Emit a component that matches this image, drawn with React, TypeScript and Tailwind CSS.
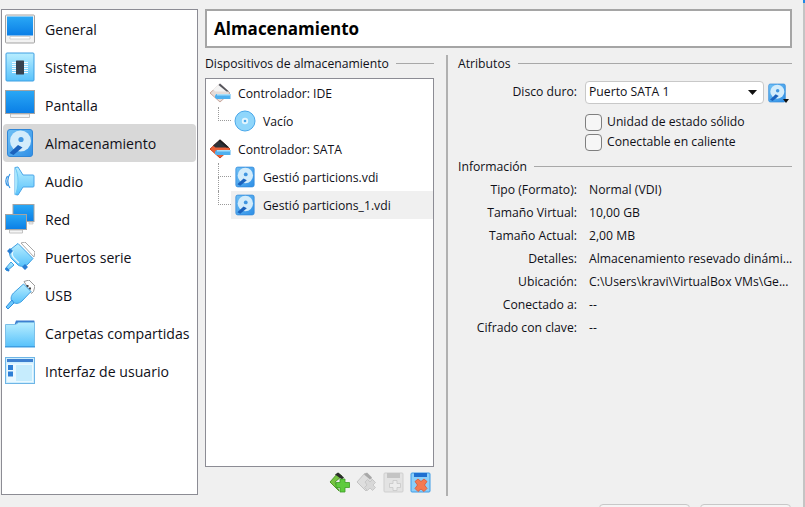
// App.tsx - VirtualBox storage settings page
import type { ReactNode } from "react"

function Ico({ size = 30, children }: { size?: number; children: ReactNode }) {
  return (
    <svg width={size} height={size} viewBox="0 0 30 30" className="shrink-0">
      <defs>
        <linearGradient id="scr" x1="0" y1="0" x2="0" y2="1">
          <stop offset="0" stopColor="#2aa8f5" />
          <stop offset="1" stopColor="#0a7ee6" />
        </linearGradient>
        <linearGradient id="lb" x1="0" y1="0" x2="0" y2="1">
          <stop offset="0" stopColor="#b9eeff" />
          <stop offset="1" stopColor="#58c2fb" />
        </linearGradient>
        <linearGradient id="disk" x1="0" y1="0" x2="1" y2="1">
          <stop offset="0" stopColor="#6fc0f5" />
          <stop offset="1" stopColor="#2f8fe6" />
        </linearGradient>
      </defs>
      {children}
    </svg>
  )
}

function General() {
  return (
    <Ico>
      <rect x="0.5" y="1" width="29" height="28" rx="1" fill="#f2f2f2" stroke="#a3a3a3" />
      <rect x="2" y="2.5" width="26" height="19" fill="url(#scr)" />
      <path d="M5 22.5h20v2.5H5z" fill="#fff" stroke="#c4c4c4" strokeWidth="0.7" />
    </Ico>
  )
}

function Sistema() {
  return (
    <Ico>
      <rect x="1" y="1" width="28" height="28" rx="1" fill="url(#lb)" stroke="#3f9fe2" />
      <g stroke="#f4fbff" strokeWidth="1">
        <path d="M7 10.5h16M7 12.5h16M7 14.5h16M7 16.5h16M7 18.5h16M7 20.5h16" />
      </g>
      <rect x="11" y="8.5" width="8" height="14" rx="0.5" fill="#36424f" />
    </Ico>
  )
}

function Pantalla() {
  return (
    <Ico>
      <rect x="0.5" y="0.5" width="29" height="23" fill="url(#scr)" stroke="#a3a3a3" />
      <path d="M5.5 24h19v3.5h-19z" fill="#f5f5f5" stroke="#b5b5b5" strokeWidth="0.8" />
    </Ico>
  )
}

function Disk({ size = 30 }: { size?: number }) {
  return (
    <Ico size={size}>
      <rect x="2.5" y="1.5" width="25" height="27" rx="2.5" fill="url(#disk)" stroke="#2f86d8" />
      <circle cx="15.5" cy="13" r="10.5" fill="#d3ecfb" />
      <circle cx="16" cy="11.5" r="2.6" fill="#3f95e0" />
      <path d="M4.5 25 13 17l4.500 2.500-9 7.500z" fill="#1b62bd" />
    </Ico>
  )
}

function Audio() {
  return (
    <Ico>
      <path d="M10 1.5 L13 1 L18 9 h10 a1 1 0 0 1 1 1 v10 a1 1 0 0 1-1 1 h-10 l-5 8 -3-.5z" fill="url(#lb)" stroke="#4aa5e8" />
      <path d="M10 1.5c4 6 4 21 0 27.500" fill="#a9e6fd" stroke="#6cc8f5" strokeWidth="1" />
      <path d="M5 8c-3 4-3 10 0 14M2.500 10c-2 3-2 7 0 10" fill="none" stroke="#2f8fe0" strokeWidth="1.2" />
    </Ico>
  )
}

function Red() {
  return (
    <Ico>
      <rect x="8" y="0.5" width="21" height="17" fill="url(#scr)" stroke="#a3a3a3" />
      <path d="M24 18h4v2h-4z" fill="#eee" stroke="#bbb" strokeWidth="0.6" />
      <rect x="0.5" y="10.5" width="21" height="15" fill="url(#scr)" stroke="#a3a3a3" />
      <path d="M4.5 26h13v3h-13z" fill="#f5f5f5" stroke="#b5b5b5" strokeWidth="0.8" />
    </Ico>
  )
}

function Puertos() {
  return (
    <Ico>
      <path d="M16 1 20 0 30 10l-1 5z" fill="#fff" stroke="#a8a8a8" />
      <path d="M13 1.5 28 16.5 23 22c-3 3-7 3-10 1L7 17c-3-3-3-7-1-10z" fill="url(#lb)" stroke="#3f9fe2" />
      <path d="M8 9c-1 2-1 5 1 7l5 5" fill="none" stroke="#e4f7ff" strokeWidth="1.4" />
      <path d="M2 9l3-3 3 3-3 3zM17 25l3-3 3 3-3 3z" fill="#2a7ed4" />
      <path d="M6 20 0 27l2 2 7-6z" fill="url(#lb)" stroke="#3f9fe2" />
      <path d="M1 26l3 3" stroke="#2a7ed4" strokeWidth="2" />
    </Ico>
  )
}

function Usb() {
  return (
    <Ico>
      <path d="M19 1.5 24 0l6 6-1.5 5.5-2 2z" fill="#fff" stroke="#9a9a9a" />
      <rect x="21.5" y="5" width="2" height="2" fill="#444" />
      <rect x="24" y="7.5" width="2" height="2" fill="#444" />
      <path d="M18.5 4 26 11.5 17 21c-3 3-7 3-9.500 1-2-2-2-6 1-9z" fill="url(#lb)" stroke="#3f9fe2" />
      <path d="M7 20 1 27l2 2 6-6z" fill="#6cc8fb" stroke="#2f8fe0" />
    </Ico>
  )
}

function Carpeta() {
  return (
    <Ico>
      <path d="M11 2.5h18a.5.5 0 0 1 .5.5v5H9z" fill="#3d7fd0" />
      <path d="M.5 6.5h10l3-2h16v24H.5z" fill="url(#lb)" stroke="#7bbfe8" />
      <path d="M0 28h30v1.5H0z" fill="#3f9fe2" />
    </Ico>
  )
}

function Interfaz() {
  return (
    <Ico>
      <rect x="0.5" y="1.5" width="29" height="26" fill="#cdeefe" stroke="#6eb5e6" />
      <rect x="2" y="3" width="26" height="3" fill="#3d7fd0" />
      <rect x="2" y="7.5" width="26" height="18.5" fill="#eaf8ff" />
      <rect x="3" y="9" width="5" height="5" fill="#2e7fd6" />
      <rect x="3" y="15.5" width="5" height="5" fill="#2e7fd6" />
      <rect x="11" y="9" width="16" height="16" fill="#c6ecfd" />
    </Ico>
  )
}

function Controller({ sata }: { sata?: boolean }) {
  return (
    <svg width="22" height="20" viewBox="0 0 22 20" className="shrink-0">
      <path d="M11 1 21 10 11 19 1 10z" fill={sata ? "#e8603a" : "#e6dcd8"} stroke={sata ? "#c9451f" : "#c9a79d"} />
      <path d="M11 .5 20 8.500H6.500L4 6.500z" fill={sata ? "#2e3238" : "#f4f4f4"} />
      <path d="M11 .5 20 8.500h-2.500L9.500 2z" fill={sata ? "#1f2226" : "#55555c"} />
      <path d="M7.500 11h14v5H7.500L6 14.500V12.500z" fill="#4fb0ef" />
      <path d="M8 11h13.500v1.500H8z" fill="#a9dffa" />
    </svg>
  )
}

function Cd() {
  return (
    <svg width="22" height="22" viewBox="0 0 22 22" className="shrink-0">
      <circle cx="11" cy="11" r="10" fill="#8fd6fb" stroke="#4aa8ea" />
      <circle cx="11" cy="11" r="3.2" fill="#e2f5fe" />
      <circle cx="11" cy="11" r="1.3" fill="#4aa8ea" />
    </svg>
  )
}

function AddCtrl() {
  return (
    <svg width="21" height="21" viewBox="0 0 21 21">
      <path d="M1 10 9 1l4 3-7 6 4 9z" fill="#76c442" stroke="#4d9a28" />
      <path d="M6 2.5 9 .5l6 5-2 2z" fill="#2c2c2c" />
      <path d="M11 7h5v3.500h4.500v5H16V20h-5v-4.500H7v-5h4z" fill="#5ecb3e" stroke="#3d9c26" strokeWidth="0.8" />
    </svg>
  )
}

function RemoveCtrl() {
  return (
    <svg width="21" height="21" viewBox="0 0 21 21">
      <path d="M1 10 9 1l9 8-8 10z" fill="#dedede" stroke="#c4c4c4" />
      <path d="M8 2.5 11 .5l5 5-2 2z" fill="#a8a8a8" />
      <path d="M9 10l2.500-2.500L14 10l2.500-2.500 3 3L17 13l2.500 2.500-3 3L14 16l-2.500 2.500-3-3L11 13z" fill="#d8d8d8" stroke="#c2c2c2" strokeWidth="0.8" />
    </svg>
  )
}

function AddDisk() {
  return (
    <svg width="21" height="21" viewBox="0 0 21 21">
      <rect x="1" y="1" width="19" height="19" rx="1" fill="#e3e3e3" stroke="#cfcfcf" />
      <rect x="4" y="1" width="13" height="5" fill="#c4c4c4" />
      <path d="M10 8.500h4v3h3.500v4H14v3h-4v-3H6.500v-4H10z" fill="#ececec" stroke="#c8c8c8" strokeWidth="0.8" />
    </svg>
  )
}

function RemoveDisk() {
  return (
    <svg width="21" height="21" viewBox="0 0 21 21">
      <rect x="1" y="1" width="19" height="19" rx="1" fill="#8ccff9" stroke="#3f9be6" />
      <rect x="4" y="1" width="13" height="4" fill="#1f6fd0" />
      <path d="M8 7l3 2.500L14 7l3 2.500-2.500 3.500L17 16.500 14 19.500l-3-2.500-3 2.500-3-3 2.500-3.500L5 9.500z" fill="#f47a52" stroke="#e0552f" strokeWidth="0.8" />
    </svg>
  )
}

const categories: { label: string; icon: ReactNode }[] = [
  { label: "General", icon: <General /> },
  { label: "Sistema", icon: <Sistema /> },
  { label: "Pantalla", icon: <Pantalla /> },
  { label: "Almacenamiento", icon: <Disk /> },
  { label: "Audio", icon: <Audio /> },
  { label: "Red", icon: <Red /> },
  { label: "Puertos serie", icon: <Puertos /> },
  { label: "USB", icon: <Usb /> },
  { label: "Carpetas compartidas", icon: <Carpeta /> },
  { label: "Interfaz de usuario", icon: <Interfaz /> },
]

const info = [
  ["Tipo (Formato):", "Normal (VDI)"],
  ["Tamaño Virtual:", "10,00 GB"],
  ["Tamaño Actual:", "2,00 MB"],
  ["Detalles:", "Almacenamiento resevado dinámi..."],
  ["Ubicación:", "C:\\Users\\kravi\\VirtualBox VMs\\Ge..."],
  ["Conectado a:", "--"],
  ["Cifrado con clave:", "--"],
]

function Heading({ text }: { text: string }) {
  return (
    <div className="flex items-center h-4 gap-[7px]">
      <span className="whitespace-nowrap">{text}</span>
      <div className="flex-1 h-px bg-[#a8a8a8] -mt-0.5" />
    </div>
  )
}

function ChildRow({ label, icon, last, selected }: { label: string; icon: ReactNode; last?: boolean; selected?: boolean }) {
  return (
    <div className="flex h-7 ml-3">
      <div className="w-[13px] shrink-0 flex flex-col">
        <div className="h-[14px] border-l border-b border-dotted border-[#9a9a9a]" />
        {!last && <div className="flex-1 border-l border-dotted border-[#9a9a9a]" />}
      </div>
      <div className={`flex-1 flex items-center pl-[3px] ${selected ? "bg-[#f0f0f0]" : ""}`}>
        <div className="w-[22px] flex justify-center">{icon}</div>
        <span className="ml-[7px] pt-px whitespace-nowrap">{label}</span>
      </div>
    </div>
  )
}

function CtrlRow({ label, sata }: { label: string; sata?: boolean }) {
  return (
    <div className="flex items-center h-7 pl-[3px]">
      <Controller sata={sata} />
      <span className="ml-[7px] pt-px whitespace-nowrap">{label}</span>
    </div>
  )
}

function Check({ label }: { label: string }) {
  return (
    <div className="flex items-center h-5">
      <div className="w-[17px] h-[17px] rounded-[4px] border border-[#7f7f7f] bg-[#f6f6f6]" />
      <span className="ml-[5px] whitespace-nowrap">{label}</span>
    </div>
  )
}

export default function App() {
  return (
    <div
      className="w-[805px] h-[507px] overflow-hidden flex bg-[#f0f0f0] pt-[9px] pl-px text-[12.2px] leading-4 text-[#101018]"
      style={{ fontFamily: '"Open Sans", sans-serif' }}
    >
      {/* lista de categorías */}
      <div className="w-[197px] h-[486px] shrink-0 bg-white border border-[#8c8c94] px-px">
        {categories.map((c) => (
          <div
            key={c.label}
            className={`flex items-center h-[38px] pl-[2px] rounded-sm ${c.label === "Almacenamiento" ? "bg-[#d8d8d8]" : ""}`}
          >
            {c.icon}
            <span className="ml-2.5 pt-px whitespace-nowrap text-[14.1px]">{c.label}</span>
          </div>
        ))}
      </div>

      <div className="w-[587px] shrink-0 ml-[7px] flex flex-col">
        <div className="h-[39px] shrink-0 bg-white border-2 border-[#a5a5a5] flex items-center pl-[7px] font-bold text-[17px] text-black">
          Almacenamiento
        </div>

        <div className="flex shrink-0 mt-[7px] h-[441px]">
          {/* dispositivos */}
          <div className="w-[229px] shrink-0 flex flex-col pt-[1px]">
            <Heading text="Dispositivos de almacenamiento" />
            <div className="h-[389px] mt-[6px] bg-white border border-[#8c8c94]">
              <CtrlRow label="Controlador: IDE" />
              <ChildRow label="Vacío" icon={<Cd />} last />
              <CtrlRow label="Controlador: SATA" sata />
              <ChildRow label="Gestió particions.vdi" icon={<Disk size={22} />} />
              <ChildRow label="Gestió particions_1.vdi" icon={<Disk size={22} />} last selected />
            </div>
            <div className="flex justify-end gap-[6px] pr-[3px] mt-[5px]">
              <AddCtrl />
              <RemoveCtrl />
              <AddDisk />
              <RemoveDisk />
            </div>
          </div>

          <div className="w-0.5 ml-3 bg-[#b0b0b0] shrink-0" />

          {/* atributos */}
          <div className="flex-1 ml-[10px] pt-[1px] min-w-0">
            <Heading text="Atributos" />
            <div className="flex items-center mt-[9px] h-[23px]">
              <span className="w-[119px] shrink-0 text-right whitespace-nowrap -mt-px">Disco duro:</span>
              <div className="w-[179px] h-[23px] ml-2 bg-white border border-[#c8c8c8] rounded-[4px] flex items-center justify-between pl-[3px] pr-[6px]">
                <span className="whitespace-nowrap -mt-px">Puerto SATA 1</span>
                <svg width="9" height="5" viewBox="0 0 9 5">
                  <path d="M0 0h9L4.500 5z" fill="#111" />
                </svg>
              </div>
              <div className="flex items-end ml-[3px]">
                <Disk size={20} />
                <svg width="6" height="4" viewBox="0 0 6 4" className="-ml-1">
                  <path d="M0 0h6L3 4z" fill="#111" />
                </svg>
              </div>
            </div>
            <div className="ml-[127px] mt-2">
              <Check label="Unidad de estado sólido" />
              <Check label="Conectable en caliente" />
            </div>
            <div className="mt-[7px]">
              <Heading text="Información" />
            </div>
            <div className="mt-[3px]">
              {info.map(([k, v]) => (
                <div key={k} className="flex items-center h-[23px]">
                  <span className="w-[119px] shrink-0 text-right whitespace-nowrap">{k}</span>
                  <span className="ml-3 whitespace-nowrap">{v}</span>
                </div>
              ))}
            </div>
          </div>
        </div>

        <div className="flex justify-end gap-[10px] mt-2 pr-px shrink-0">
          <div className="w-[91px] h-6 bg-[#f5f5f5] border border-[#c8c8c8] rounded-[4px]" />
          <div className="w-[91px] h-6 bg-[#f5f5f5] border border-[#c8c8c8] rounded-[4px]" />
        </div>
      </div>

      {/* borde de la ventana de atrás */}
      <div className="ml-[11px] w-[2px] -mt-[9px] h-[507px] bg-[#c4c4c4] shrink-0">
        <div className="h-[3px] bg-[#1e88e5]" />
      </div>
    </div>
  )
}
